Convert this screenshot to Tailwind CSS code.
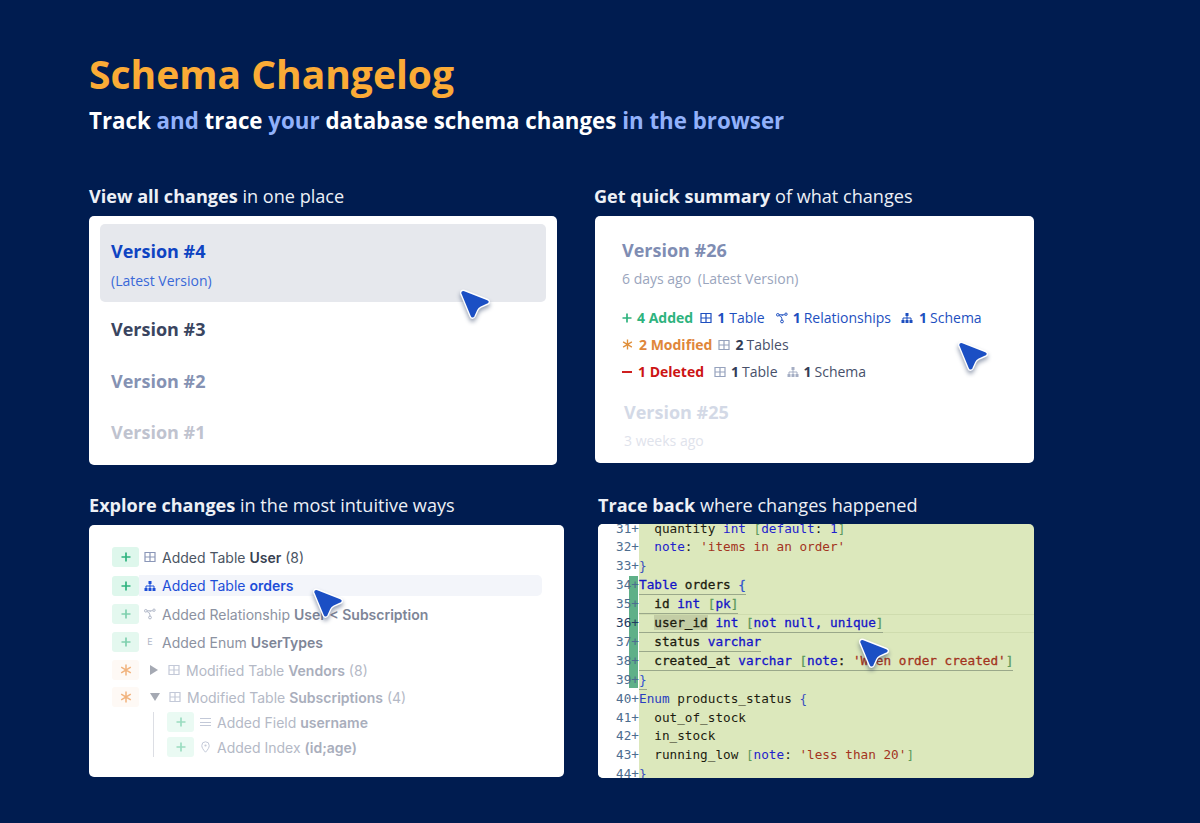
<!DOCTYPE html>
<html lang="en">
<head>
    <meta charset="UTF-8">
    <meta name="viewport" content="width=device-width, initial-scale=1.0">
    <title>Schema Changelog</title>
    <script src="https://cdn.jsdelivr.net/npm/@tailwindcss/browser@4"></script>
</head>
<body class="bg-[#001c50] h-[823px] overflow-hidden font-['Open_Sans',sans-serif]">
    <!-- shared icons -->
    <svg class="hidden">
        <symbol id="i-table" viewBox="0 0 12 12"><path d="M1 1.5h10v9H1zM1 6h10M6 1.5v9" fill="none" stroke="currentColor" stroke-width="1.2"/></symbol>
        <symbol id="i-rel" viewBox="0 0 12 12"><g fill="none" stroke="currentColor" stroke-width="1"><circle cx="1.800" cy="2.800" r="1.300"/><circle cx="10" cy="2.200" r="1.200"/><circle cx="6" cy="9.500" r="1.400"/><path d="M3.100 2.800h5.700M3 3.600c2 .2 2.900 2 3 4.500M6.200 3v1"/></g></symbol>
        <symbol id="i-schema" viewBox="0 0 12 12"><path d="M4.5 1h3v3h-3zM.5 8h3v3h-3zM4.5 8h3v3h-3zM8.5 8h3v3h-3z" fill="currentColor"/><path d="M6 4v4M2 8V6h8v2" fill="none" stroke="currentColor"/></symbol>
        <symbol id="i-cursor" viewBox="0 0 36 36"><path d="M3.800 5.800C3 3 5 1.800 7.500 2.500L30.500 11.500C33 12.600 33 15 31 16L24 19.200C22 20.100 21.400 21 20.800 22.300L18 28.500C16.800 31 14 30.700 13.200 28.400Z" fill="#1b4fc4" stroke="#fff" stroke-width="1.400"/></symbol>
        <symbol id="i-plus" viewBox="0 0 10 10"><path d="M5 0.500v9M0.500 5h9" fill="none" stroke="currentColor" stroke-width="1.700"/></symbol>
        <symbol id="i-star" viewBox="0 0 12 12"><path d="M6 .5v11M1.200 3.200l9.600 5.600M10.800 3.200l-9.600 5.600" fill="none" stroke="currentColor" stroke-width="1.500"/></symbol>
    </svg>

    <div class="pl-[89px] pt-[49px]">
        <h1 class="text-[39px] leading-[50px] font-bold text-[#fbab36]">Schema Changelog</h1>
        <p class="text-[22.300px] leading-[32px] mt-[6px] font-bold text-white">Track <span class="text-[#91b1fb]">and</span> trace <span class="text-[#91b1fb]">your</span> database schema changes <span class="text-[#91b1fb]">in the browser</span></p>

        <div class="flex mt-[46px]">
            <!-- all changes -->
            <div class="w-[468px]">
                <h2 class="text-[18.100px] leading-[26px] text-[#edf0f6]"><b class="font-bold">View all changes</b> in one place</h2>
                <div class="relative mt-[7px] h-[249px] bg-white rounded-[5px] px-[11px] pt-[8px] font-bold text-[18px]">
                    <div class="h-[78px] bg-[#e6e8ed] rounded-[5px] pl-[11px] pt-[14px]">
                        <div class="leading-[26px] text-[#0f44c2]">Version #4</div>
                        <div class="mt-[7px] leading-[20px] text-[14px] font-normal text-[#3a68d8]">(Latest Version)</div>
                    </div>
                    <div class="pl-[11px] mt-[14px] leading-[26px] text-[#3a4560]">Version #3</div>
                    <div class="pl-[11px] mt-[26px] leading-[26px] text-[#8592b3]">Version #2</div>
                    <div class="pl-[11px] mt-[25px] leading-[26px] text-[#bfc3cf]">Version #1</div>
                    <svg class="absolute left-[368px] top-[72px] w-[36px] h-[36px] drop-shadow-[0_3px_2px_rgba(30,50,90,0.45)]"><use href="#i-cursor"/></svg>
                </div>
            </div>

            <!-- summary -->
            <div class="w-[439px] ml-[38px]">
                <h2 class="-ml-[1px] text-[18.100px] leading-[26px] text-[#edf0f6]"><b class="font-bold">Get quick summary</b> of what changes</h2>
                <div class="relative mt-[7px] h-[247px] bg-white rounded-[5px] pl-[27px] pt-[21px] text-[14px]">
                    <div class="text-[18px] font-bold leading-[26px] text-[#7f8db3]">Version #26</div>
                    <div class="mt-[6px] leading-[20px] text-[#9aa5bd]">6 days ago <span class="ml-[3px]">(Latest Version)</span></div>

                    <div class="mt-[15px] flex items-center h-[27px] text-[#1d4fc0]">
                        <svg class="w-[10px] h-[10px] text-[#2eb37e]"><use href="#i-plus"/></svg>
                        <b class="ml-[5px] text-[#2eb37e] font-bold">4 Added</b>
                        <svg class="ml-[7px] w-[12px] h-[12px]"><use href="#i-table"/></svg>
                        <b class="ml-[5px]">1</b><span class="ml-[4px]">Table</span>
                        <svg class="ml-[11px] w-[12px] h-[12px]"><use href="#i-rel"/></svg>
                        <b class="ml-[5px]">1</b><span class="ml-[3px]">Relationships</span>
                        <svg class="ml-[10px] w-[12px] h-[12px]"><use href="#i-schema"/></svg>
                        <b class="ml-[6px]">1</b><span class="ml-[3px]">Schema</span>
                    </div>
                    <div class="flex items-center h-[27px] text-[#47506a]">
                        <svg class="w-[11px] h-[11px] text-[#e0903c]"><use href="#i-star"/></svg>
                        <b class="ml-[6px] text-[#e0863a] font-bold">2 Modified</b>
                        <svg class="ml-[6px] w-[12px] h-[12px] text-[#96a2bd]"><use href="#i-table"/></svg>
                        <b class="ml-[5px] text-[#333c55]">2</b><span class="ml-[3px]">Tables</span>
                    </div>
                    <div class="flex items-center h-[27px] text-[#47506a]">
                        <span class="w-[10px] h-[2px] bg-[#cf1f1f]"></span>
                        <b class="ml-[6px] text-[#cc1414] font-bold">1 Deleted</b>
                        <svg class="ml-[10px] w-[12px] h-[12px] text-[#96a2bd]"><use href="#i-table"/></svg>
                        <b class="ml-[5px] text-[#333c55]">1</b><span class="ml-[3px]">Table</span>
                        <svg class="ml-[9px] w-[12px] h-[12px] text-[#a5aec4]"><use href="#i-schema"/></svg>
                        <b class="ml-[5px] text-[#333c55]">1</b><span class="ml-[3px]">Schema</span>
                    </div>

                    <div class="ml-[2px] mt-[14px] text-[18px] font-bold leading-[26px] text-[#d3d9e6]">Version #25</div>
                    <div class="ml-[2px] mt-[6px] leading-[20px] text-[#dfe3ec]">3 weeks ago</div>
                    <svg class="absolute left-[360px] top-[124px] w-[36px] h-[36px] drop-shadow-[0_3px_2px_rgba(30,50,90,0.45)]"><use href="#i-cursor"/></svg>
                </div>
            </div>
        </div>

        <div class="flex mt-[27px]">
            <!-- explore -->
            <div class="w-[475px]">
                <h2 class="text-[18.100px] leading-[26px] text-[#edf0f6]"><b class="font-bold">Explore changes</b> in the most intuitive ways</h2>
                <div class="relative mt-[7px] h-[252px] bg-white rounded-[5px] pl-[23px] pt-[22px] font-['Inter',sans-serif] text-[14px] text-[#4b5563]">
                    <div class="flex items-center h-[20px]">
                        <span class="w-[27px] h-[20px] rounded-[3px] bg-[#def7ec] flex items-center justify-center text-[#2eb37e]"><svg class="w-[10px] h-[10px]"><use href="#i-plus"/></svg></span>
                        <svg class="ml-[5px] w-[12px] h-[12px] text-[#8b97b8]"><use href="#i-table"/></svg>
                        <span class="ml-[6px]">Added Table <b class="font-semibold text-[#374151]">User</b> (8)</span>
                    </div>
                    <div class="flex items-center h-[21px] mt-[8px]">
                        <span class="w-[27px] h-[20px] rounded-[3px] bg-[#def7ec] flex items-center justify-center text-[#2eb37e]"><svg class="w-[10px] h-[10px]"><use href="#i-plus"/></svg></span>
                        <div class="flex items-center w-[403px] h-[21px] bg-[#f3f5fa] rounded-r-[5px] text-[#1d4ed8]">
                            <svg class="ml-[5px] w-[12px] h-[12px]"><use href="#i-schema"/></svg>
                            <span class="ml-[6px]">Added Table <b class="font-semibold">orders</b></span>
                        </div>
                    </div>
                    <div class="flex items-center h-[20px] mt-[8px] text-[#8c92a1]">
                        <span class="w-[27px] h-[20px] rounded-[3px] bg-[#e4f8ef] flex items-center justify-center text-[#7fd0ae]"><svg class="w-[10px] h-[10px]"><use href="#i-plus"/></svg></span>
                        <svg class="ml-[5px] w-[12px] h-[12px] text-[#b0b7c8]"><use href="#i-rel"/></svg>
                        <span class="ml-[6px]">Added Relationship <b class="font-semibold text-[#7e8597]">User &lt; Subscription</b></span>
                    </div>
                    <div class="flex items-center h-[20px] mt-[8px] text-[#8c92a1]">
                        <span class="w-[27px] h-[20px] rounded-[3px] bg-[#e4f8ef] flex items-center justify-center text-[#7fd0ae]"><svg class="w-[10px] h-[10px]"><use href="#i-plus"/></svg></span>
                        <span class="ml-[5px] w-[12px] text-center text-[9px] text-[#b0b7c8]">E</span>
                        <span class="ml-[6px]">Added Enum <b class="font-semibold text-[#7e8597]">UserTypes</b></span>
                    </div>
                    <div class="flex items-center h-[20px] mt-[8px] text-[#b4b9c6]">
                        <span class="w-[27px] h-[20px] rounded-[3px] bg-[#fef9f5] flex items-center justify-center text-[#f1b27c]"><svg class="w-[12px] h-[12px]"><use href="#i-star"/></svg></span>
                        <span class="ml-[11px] w-0 h-0 border-y-[5px] border-y-transparent border-l-[8px] border-l-[#a5a9b3]"></span>
                        <svg class="ml-[10px] w-[12px] h-[12px] text-[#c3c9d8]"><use href="#i-table"/></svg>
                        <span class="ml-[6px]">Modified Table <b class="font-semibold text-[#a9aebc]">Vendors</b> (8)</span>
                    </div>
                    <div class="flex items-center h-[20px] mt-[7px] text-[#b4b9c6]">
                        <span class="w-[27px] h-[20px] rounded-[3px] bg-[#fef9f5] flex items-center justify-center text-[#f1b27c]"><svg class="w-[12px] h-[12px]"><use href="#i-star"/></svg></span>
                        <span class="ml-[11px] w-0 h-0 border-x-[5px] border-x-transparent border-t-[8px] border-t-[#a5a9b3]"></span>
                        <svg class="ml-[9px] w-[12px] h-[12px] text-[#c3c9d8]"><use href="#i-table"/></svg>
                        <span class="ml-[6px]">Modified Table <b class="font-semibold text-[#a9aebc]">Subscriptions</b> (4)</span>
                    </div>
                    <div class="ml-[41px] mt-[5px] pl-[13px] border-l border-[#dcdee4] text-[#b4b9c6]">
                        <div class="flex items-center h-[20px]">
                            <span class="w-[27px] h-[20px] rounded-[3px] bg-[#eafaf3] flex items-center justify-center text-[#9adcc0]"><svg class="w-[10px] h-[10px]"><use href="#i-plus"/></svg></span>
                            <span class="ml-[6px] w-[11px] h-[8px] border-y border-[#c3c9d8] flex items-center"><span class="w-full h-px bg-[#c3c9d8]"></span></span>
                            <span class="ml-[6px]">Added Field <b class="font-semibold text-[#a9aebc]">username</b></span>
                        </div>
                        <div class="flex items-center h-[20px] mt-[5px]">
                            <span class="w-[27px] h-[20px] rounded-[3px] bg-[#eafaf3] flex items-center justify-center text-[#9adcc0]"><svg class="w-[10px] h-[10px]"><use href="#i-plus"/></svg></span>
                            <svg class="ml-[6px] w-[11px] h-[12px] text-[#c3c9d8]" viewBox="0 0 11 12"><path d="M5.500 11.200C3 8.500 1.800 6.500 1.800 4.500a3.700 3.700 0 0 1 7.400 0c0 2-1.200 4-3.700 6.700Z" fill="none" stroke="currentColor"/><circle cx="5.500" cy="4.500" r="1.100" fill="currentColor"/></svg>
                            <span class="ml-[6px]">Added Index <b class="font-semibold text-[#a9aebc]">(id;age)</b></span>
                        </div>
                    </div>
                    <svg class="absolute left-[221px] top-[62px] w-[36px] h-[36px] drop-shadow-[0_3px_2px_rgba(30,50,90,0.45)]"><use href="#i-cursor"/></svg>
                </div>
            </div>

            <!-- trace back -->
            <div class="w-[436px] ml-[34px]">
                <h2 class="text-[18.100px] leading-[26px] text-[#edf0f6]"><b class="font-bold">Trace back</b> where changes happened</h2>
                <div class="relative mt-[6px] h-[254px] bg-[#dce8bc] rounded-[5px] overflow-hidden font-['DejaVu_Sans_Mono',monospace] text-[12.700px] leading-[18.900px] text-[#1c1c10]">
                    <div class="absolute left-0 top-0 bottom-0 w-[41px] bg-white"></div>
                    <div class="absolute left-[31px] top-[52px] w-[9px] h-[112px] bg-[#5fb088]"></div>
                    <div class="relative flex flex-col whitespace-pre -mt-[4.500px]">
                        <div class="flex"><span class="w-[41px] text-right text-[#4d6d8f]">31+</span><span>  quantity <span class="text-[#2222cc]">int</span> <span class="text-[#5c9a5c]">[</span><span class="text-[#2222cc]">default</span>: <span class="text-[#2222cc]">1</span><span class="text-[#5c9a5c]">]</span></span></div>
                        <div class="flex"><span class="w-[41px] text-right text-[#4d6d8f]">32+</span><span>  <span class="text-[#2222cc]">note</span>: <span class="text-[#a3341e]">'items in an order'</span></span></div>
                        <div class="flex"><span class="w-[41px] text-right text-[#4d6d8f]">33+</span><span class="text-[#3a4fc0]">}</span></div>
                        <div class="flex"><span class="w-[41px] text-right text-[#4d6d8f]">34+</span><span class="inline-block h-[18.900px] border-b border-[#9aa88a] [-webkit-text-stroke:0.300px]"><span class="text-[#1414c8]">Table</span> orders <span class="text-[#2f50d0]">{</span></span></div>
                        <div class="flex"><span class="w-[41px] text-right text-[#4d6d8f]">35+</span><span class="inline-block h-[18.900px] border-b border-[#9aa88a] [-webkit-text-stroke:0.300px]">  id <span class="text-[#1414c8]">int</span> <span class="text-[#5c9a5c]">[</span><span class="text-[#1414c8]">pk</span><span class="text-[#5c9a5c]">]</span></span></div>
                        <div class="flex"><span class="w-[41px] text-right text-[#1f3a5f]">36+</span><div class="flex-1 h-[18.900px] shadow-[inset_0_1px_0_#cfdcae,inset_0_-1px_0_#cfdcae]"><span class="inline-block h-[18.900px] border-b border-[#9aa88a] [-webkit-text-stroke:0.300px]">  <span class="bg-[#c3cda5]">user_id</span> <span class="text-[#1414c8]">int</span> <span class="text-[#5c9a5c]">[</span><span class="text-[#1414c8]">not null, unique</span><span class="text-[#5c9a5c]">]</span></span></div></div>
                        <div class="flex"><span class="w-[41px] text-right text-[#4d6d8f]">37+</span><span class="inline-block h-[18.900px] border-b border-[#9aa88a] [-webkit-text-stroke:0.300px]">  status <span class="text-[#1414c8]">varchar</span></span></div>
                        <div class="flex"><span class="w-[41px] text-right text-[#4d6d8f]">38+</span><span class="inline-block h-[18.900px] border-b border-[#9aa88a] [-webkit-text-stroke:0.300px]">  created_at <span class="text-[#1414c8]">varchar</span> <span class="text-[#5c9a5c]">[</span><span class="text-[#1414c8]">note</span>: <span class="text-[#a3341e]">'When order created'</span><span class="text-[#5c9a5c]">]</span></span></div>
                        <div class="flex"><span class="w-[41px] text-right text-[#4d6d8f]">39+</span><span class="inline-block h-[18.900px] border-b border-[#9aa88a] text-[#2f50d0]">}</span></div>
                        <div class="flex"><span class="w-[41px] text-right text-[#4d6d8f]">40+</span><span><span class="text-[#2a3ec0]">Enum</span> products_status <span class="text-[#3a4fc0]">{</span></span></div>
                        <div class="flex"><span class="w-[41px] text-right text-[#4d6d8f]">41+</span><span>  out_of_stock</span></div>
                        <div class="flex"><span class="w-[41px] text-right text-[#4d6d8f]">42+</span><span>  in_stock</span></div>
                        <div class="flex"><span class="w-[41px] text-right text-[#4d6d8f]">43+</span><span>  running_low <span class="text-[#5c9a5c]">[</span><span class="text-[#2222cc]">note</span>: <span class="text-[#a3341e]">'less than 20'</span><span class="text-[#5c9a5c]">]</span></span></div>
                        <div class="flex"><span class="w-[41px] text-right text-[#4d6d8f]">44+</span><span class="text-[#3a4fc0]">}</span></div>
                    </div>
                    <svg class="absolute left-[258px] top-[113px] w-[36px] h-[36px] drop-shadow-[0_3px_2px_rgba(30,50,90,0.45)]"><use href="#i-cursor"/></svg>
                </div>
            </div>
        </div>
    </div>
</body>
</html>
